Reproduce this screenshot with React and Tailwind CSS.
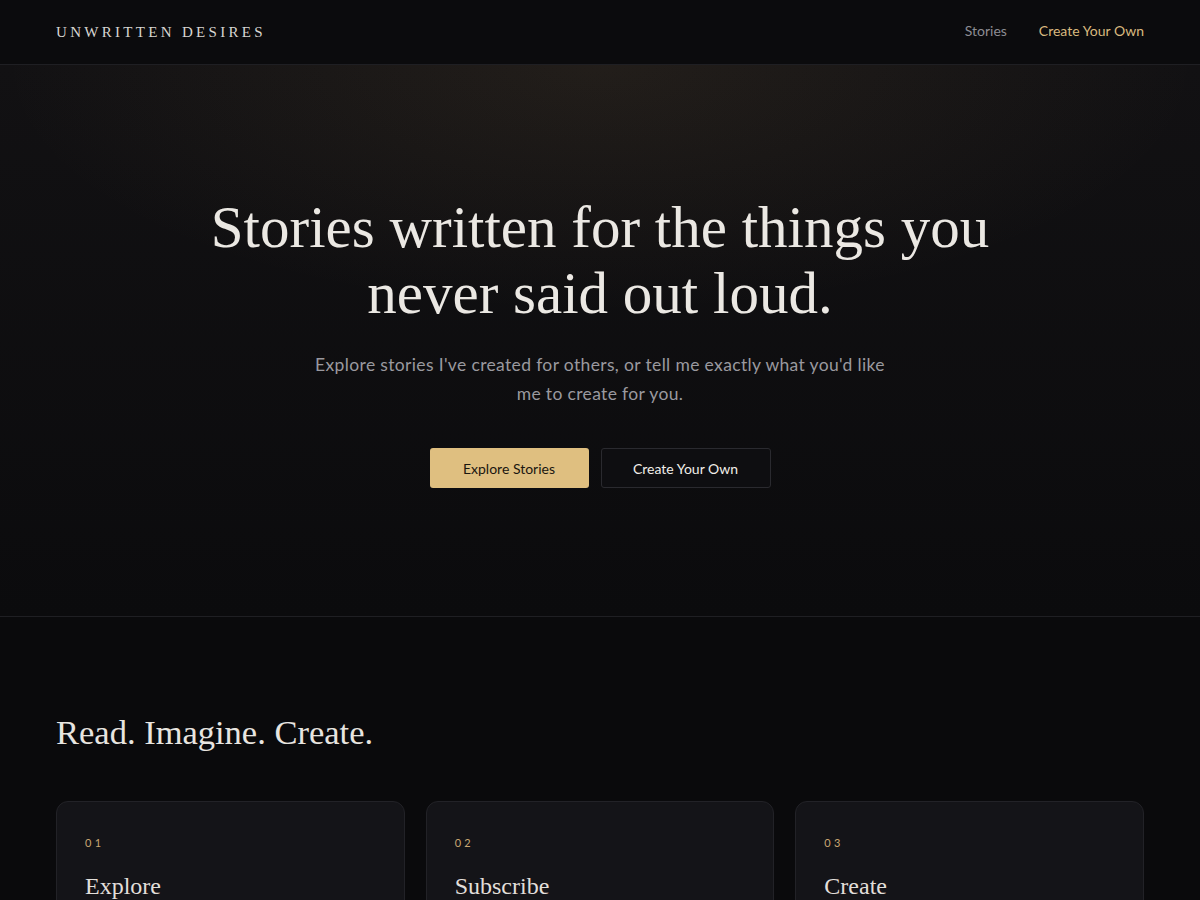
export default function App() {
  const serif = { fontFamily: '"Liberation Serif", "DejaVu Serif", serif' };
  const steps = [
    { n: '01', title: 'Explore' },
    { n: '02', title: 'Subscribe' },
    { n: '03', title: 'Create' },
  ];

  return (
    <div className="min-h-screen bg-[#0a0a0c] text-white font-['Lato',sans-serif]">
      {/* Navbar */}
      <header className="h-[65px] border-b border-[#1f1f23] bg-[#0b0b0d]">
        <div className="mx-auto flex h-full max-w-[1200px] items-center justify-between px-14">
          <span className="text-[15px] tracking-[0.22em] text-[#d8d6d2]" style={serif}>
            UNWRITTEN DESIRES
          </span>
          <nav className="flex items-center gap-8 pb-[3px] text-[14px]">
            <a className="text-[#8d8d93]">Stories</a>
            <a className="text-[#d9b97f]">Create Your Own</a>
          </nav>
        </div>
      </header>

      {/* Hero */}
      <section className="h-[552px] border-b border-[#1f1f23] bg-[radial-gradient(ellipse_50%_45%_at_50%_0%,rgba(200,160,100,0.09),transparent),linear-gradient(to_bottom,#121113,#0b0b0d)]">
        <div className="flex flex-col items-center pt-[129px] text-center">
          <h1 className="text-[59px] leading-[66px] text-[#ebe8e3]" style={serif}>
            Stories written for the things you
            <br />
            never said out loud.
          </h1>
          <p className="mt-6 max-w-[640px] text-[17.5px] leading-[29px] tracking-[0.02em] text-[#9a999f]">
            Explore stories I've created for others, or tell me exactly what you'd like
            <br />
            me to create for you.
          </p>
          <div className="mt-10 flex gap-3">
            <button className="h-10 w-[159px] rounded-[3px] bg-[#dfbf80] text-[14px] text-[#1a1610]">
              Explore Stories
            </button>
            <button className="h-10 w-[170px] rounded-[3px] border border-[#2a2a2f] bg-[#0e0e11] text-[14px] text-[#f1eee9]">
              Create Your Own
            </button>
          </div>
        </div>
      </section>

      {/* How it works */}
      <section className="mx-auto max-w-[1200px] px-14 pt-[90px]">
        <h2 className="text-[34.5px] text-[#e8e5e0]" style={serif}>
          Read. Imagine. Create.
        </h2>
        <div className="mt-[42px] grid grid-cols-3 gap-[21px]">
          {steps.map((s) => (
            <div
              key={s.n}
              className="h-[220px] rounded-xl border border-[#222227] bg-[#141418] px-7 pt-[33px]"
            >
              <div className="text-[11px] tracking-[0.3em] text-[#c9a772]">{s.n}</div>
              <h3 className="mt-[17px] text-[24px] text-[#e2dfda]" style={serif}>
                {s.title}
              </h3>
            </div>
          ))}
        </div>
      </section>
    </div>
  );
}
